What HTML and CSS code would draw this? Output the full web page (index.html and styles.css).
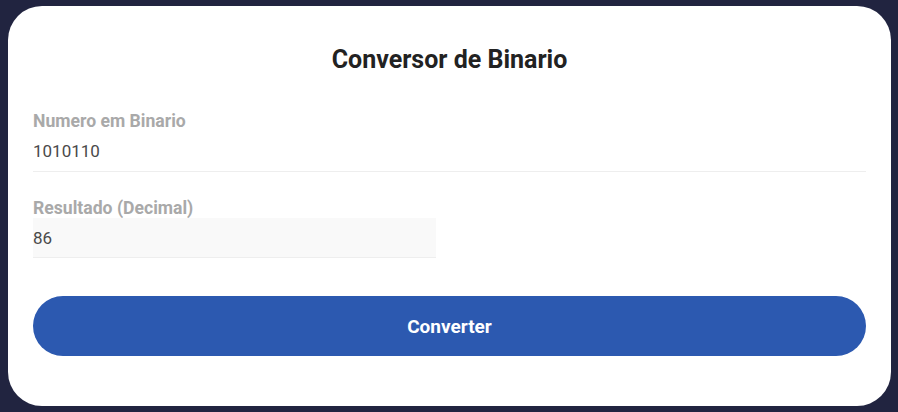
FILE: index.html
```html
<!DOCTYPE html>
<html lang="pt">
<head>
<meta charset="utf-8">
<title>Conversor de Binario</title>
<link rel="stylesheet" href="styles.css">
</head>
<body>
<main class="card">
  <h1 class="title">Conversor de Binario</h1>
  <div class="field">
    <label class="label" for="bin">Numero em Binario</label>
    <input class="input" id="bin" type="text" value="1010110">
  </div>
  <div class="field">
    <label class="label" for="dec">Resultado (Decimal)</label>
    <input class="input input-result" id="dec" type="text" value="86" readonly>
  </div>
  <button class="button" type="button">Converter</button>
</main>
</body>
</html>
```
FILE: styles.css
```css
* { box-sizing: border-box; }
html, body { height: 100%; }
body {
  margin: 0;
  padding: 6px 7px 6px 8px;
  background: #212440;
  font-family: Roboto, "Liberation Sans", sans-serif;
  display: flex;
  align-items: center;
}
.card {
  width: 100%;
  height: 400px;
  background: #ffffff;
  border-radius: 34px;
  padding: 40px 25px 50px 25px;
  display: flex;
  flex-direction: column;
}
.title {
  margin: 0;
  font-size: 25px;
  font-weight: 700;
  color: #222222;
  text-align: center;
  line-height: 28px;
}
.field {
  display: flex;
  flex-direction: column;
  margin-top: 38px;
}
.field + .field { margin-top: 27px; }
.label {
  font-size: 17.6px;
  font-weight: 700;
  color: #a9a9a9;
  line-height: 19px;
}
.input {
  font-family: Roboto, "Liberation Sans", sans-serif;
  font-size: 17px;
  color: #4a4a4a;
  height: 41px;
  padding: 0;
  border: none;
  border-bottom: 1px solid #eeeeee;
  background: transparent;
  outline: none;
  width: 100%;
}
.input-result {
  width: 403px;
  height: 40px;
  background: #f9f9f9;
}
.button {
  margin-top: 38px;
  height: 60px;
  border: none;
  border-radius: 30px;
  background: #2c59b0;
  color: #ffffff;
  font-family: Roboto, "Liberation Sans", sans-serif;
  font-size: 19px;
  font-weight: 700;
  cursor: pointer;
}
```
